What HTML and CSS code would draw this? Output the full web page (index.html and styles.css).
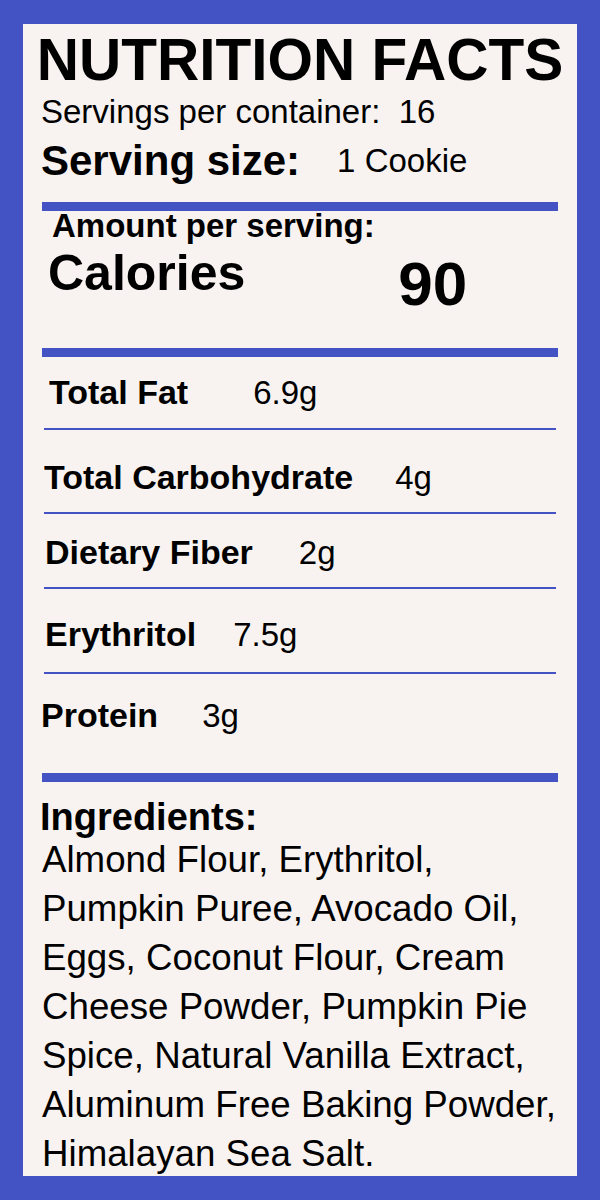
FILE: index.html
```html
<!DOCTYPE html>
<html lang="en">
<head>
  <meta charset="UTF-8" />
  <meta name="viewport" content="width=device-width, initial-scale=1.0"/>
  <title>Nutrition Facts</title>
  <link rel="stylesheet" href="styles.css">
</head>
<body>
  <div class="label">
    <h1 class="title">NUTRITION FACTS</h1>
    <div class="servings">Servings per container:&nbsp; 16</div>
    <div class="serving-size">Serving size:<span class="size-value">1 Cookie</span></div>

    <div class="bar"></div>

    <div class="amount">Amount per serving:</div>
    <div class="calories">
      <span class="cal-label">Calories</span>
      <span class="cal-value">90</span>
    </div>

    <div class="bar bar-calories"></div>

    <div class="row row-fat"><b>Total Fat</b><span>6.9g</span></div>
    <div class="rule rule-fat"></div>
    <div class="row row-carb"><b>Total Carbohydrate</b><span>4g</span></div>
    <div class="rule rule-carb"></div>
    <div class="row row-fiber"><b>Dietary Fiber</b><span>2g</span></div>
    <div class="rule rule-fiber"></div>
    <div class="row row-ery"><b>Erythritol</b><span>7.5g</span></div>
    <div class="rule rule-ery"></div>
    <div class="row row-protein"><b>Protein</b><span>3g</span></div>

    <div class="bar bar-ingredients"></div>

    <h2 class="ingredients-title">Ingredients:</h2>
    <p class="ingredients">
      Almond Flour, Erythritol,<br>
      Pumpkin Puree, Avocado Oil,<br>
      Eggs, Coconut Flour, Cream<br>
      Cheese Powder, Pumpkin Pie<br>
      Spice, Natural Vanilla Extract,<br>
      Aluminum Free Baking Powder,<br>
      Himalayan Sea Salt.
    </p>
  </div>
</body>
</html>
```

FILE: styles.css
```css
body {
  margin: 0;
  padding: 24px 23px;
  background: #4353c4;
  font-family: "Liberation Sans", Arial, sans-serif;
  color: #000;
}
.label {
  width: 554px;
  height: 1152px;
  background: #f8f3f1;
  overflow: hidden;
}
.label > * {
  line-height: 1;
}
.title {
  margin: 7px 0 0;
  font-size: 58.5px;
  font-weight: bold;
  text-align: center;
}
.servings {
  margin: 5px 0 0 18px;
  font-size: 33px;
}
.serving-size {
  margin: 12px 0 0 18px;
  font-size: 42px;
  font-weight: bold;
}
.size-value {
  margin-left: 37px;
  font-size: 33px;
  font-weight: normal;
  vertical-align: 3px;
}
.bar {
  height: 9px;
  margin: 20px 19px 0;
  background: #4353c4;
}
.amount {
  margin: -2px 0 0 29px;
  font-size: 33px;
  font-weight: bold;
}
.calories {
  display: flex;
  align-items: flex-start;
  margin: 6px 0 0 25px;
  font-weight: bold;
}
.cal-label {
  font-size: 50px;
}
.cal-value {
  margin: 5px 0 0 153px;
  font-size: 62px;
}
.bar-calories {
  margin-top: 33px;
}
.row {
  display: flex;
  align-items: baseline;
  font-size: 33px;
}
.row b {
  font-size: 34px;
  font-weight: bold;
}
.row-fat { margin: 18px 0 0 26px; }
.row-fat span { margin-left: 65px; }
.row-carb { margin: 30px 0 0 21px; }
.row-carb span { margin-left: 42px; }
.row-fiber { margin: 21px 0 0 22px; }
.row-fiber span { margin-left: 46px; }
.row-ery { margin: 28px 0 0 22px; }
.row-ery span { margin-left: 37px; }
.row-protein { margin: 24px 0 0 18px; }
.row-protein span { margin-left: 44px; }
.rule {
  height: 2px;
  margin: 0 21px;
  background: #4353c4;
}
.rule-fat { margin-top: 19px; }
.rule-carb { margin-top: 18px; }
.rule-fiber { margin-top: 18px; }
.rule-ery { margin-top: 21px; }
.bar-ingredients {
  margin-top: 41px;
}
.ingredients-title {
  margin: 16px 0 0 17px;
  font-size: 38px;
  font-weight: bold;
}
.label > .ingredients {
  margin: -1px 0 0 19px;
  font-size: 36.7px;
  line-height: 49px;
  white-space: nowrap;
}
```
